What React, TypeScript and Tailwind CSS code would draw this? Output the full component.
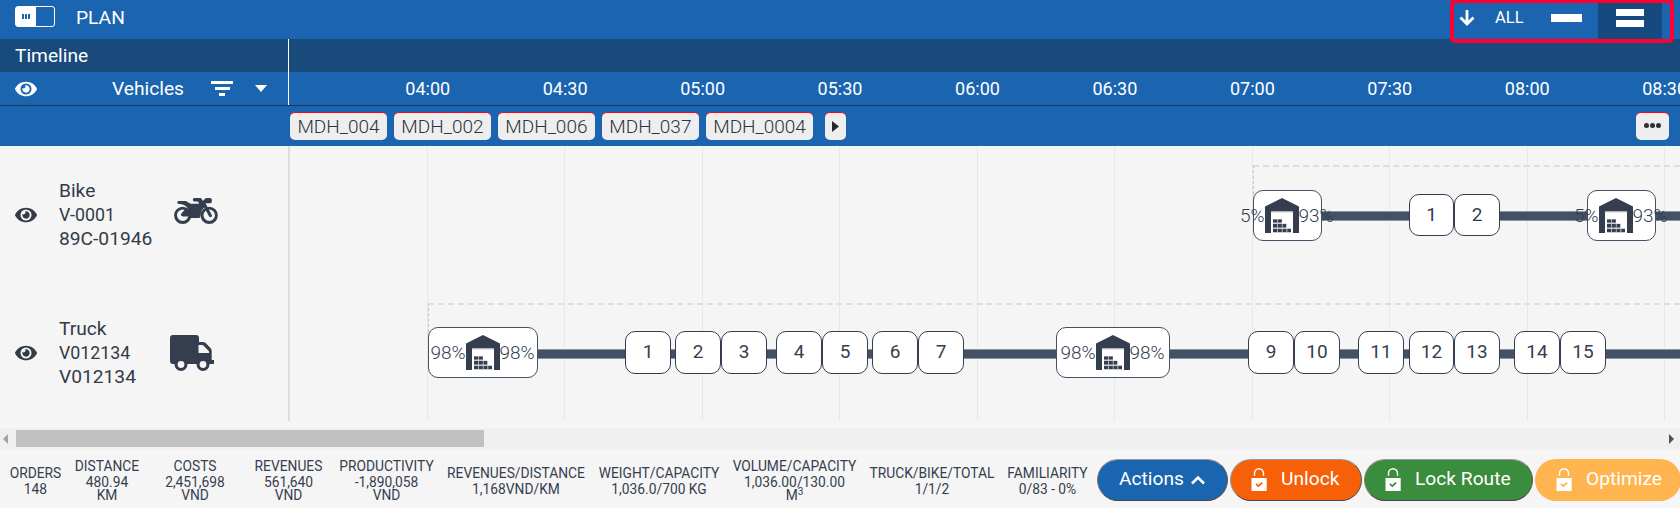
import React from "react";
import { FaEye } from "react-icons/fa";

const times = ["04:00", "04:30", "05:00", "05:30", "06:00", "06:30", "07:00", "07:30", "08:00", "08:30"];
const chips = ["MDH_004", "MDH_002", "MDH_006", "MDH_037", "MDH_0004"];

type Node = { x: number; w: number; label: string };
type Depot = { x: number; w: number; left: string; right: string };
type Route = { start: number; lineTop: string; depotTop: string; nodeTop: string; nodes: Node[]; depots: Depot[] };

// x values are offsets from the left edge of the chart area
const bike: Route = {
  start: 963,
  lineTop: "top-[66px]",
  depotTop: "top-[45px]",
  nodeTop: "top-[49px] h-[42px]",
  nodes: [
    { x: 1119, w: 45, label: "1" },
    { x: 1164, w: 46, label: "2" },
  ],
  depots: [
    { x: 963, w: 69, left: "5%", right: "93%" },
    { x: 1297, w: 69, left: "5%", right: "93%" },
  ],
};

const truck: Route = {
  start: 138,
  lineTop: "top-[66px]",
  depotTop: "top-[44px]",
  nodeTop: "top-[48px] h-[43px]",
  nodes: [
    { x: 335, w: 46, label: "1" },
    { x: 385, w: 46, label: "2" },
    { x: 431, w: 46, label: "3" },
    { x: 486, w: 46, label: "4" },
    { x: 532, w: 46, label: "5" },
    { x: 582, w: 46, label: "6" },
    { x: 628, w: 46, label: "7" },
    { x: 958, w: 46, label: "9" },
    { x: 1004, w: 46, label: "10" },
    { x: 1068, w: 46, label: "11" },
    { x: 1119, w: 45, label: "12" },
    { x: 1164, w: 46, label: "13" },
    { x: 1224, w: 46, label: "14" },
    { x: 1270, w: 46, label: "15" },
  ],
  depots: [
    { x: 138, w: 110, left: "98%", right: "98%" },
    { x: 766, w: 114, left: "98%", right: "98%" },
  ],
};

function Warehouse() {
  return (
    <svg className="block h-[35px] w-[34px] shrink-0" viewBox="0 0 34 35" fill="#353e4f">
      <path d="M0 8.500 17 0l17 8.500V35h-6V13.500H6V35H0z" />
      <path d="M6 13.500h22V14.500H6zM8 21h9v4.500h4.500V30H26v5H8z" fill="#c9ccd0" />
      <path d="M8 21.500h4v3H8zM12.800 21.500h4v3h-4zM8 26h4v3.400H8zM12.800 26h4v3.400h-4zM17.600 26h3.600v3.400h-3.600zM8 31h4v3H8zM12.800 31h4v3h-4zM17.600 31h3.800v3h-3.800zM22.300 31h3.700v3h-3.700z" />
    </svg>
  );
}

function LockIcon({ tick }: { tick: string }) {
  return (
    <svg className="mb-px block h-[23px] w-[16px]" viewBox="0 0 16 23" fill="none">
      <path d="M3.500 7.800V5.300a4.500 4.500 0 0 1 9 0v2.500" stroke="#fff" strokeWidth="1.400" />
      <path d="M0.500 10h15.200v13H0.500z" fill="#fff" />
      <path d="m5 16 2.400 2.200 3.800-3.600" stroke={tick} strokeWidth="1.700" />
    </svg>
  );
}

function Motorcycle() {
  return (
    <svg className="block h-[26px] w-[44px]" viewBox="0 0 44 26" fill="#353e4f">
      <circle cx="8.700" cy="17.300" r="7.200" fill="none" stroke="#353e4f" strokeWidth="2.900" />
      <circle cx="35.200" cy="17.300" r="7.200" fill="none" stroke="#353e4f" strokeWidth="2.900" />
      <path d="M4.500 3h7c2 0 3.500 2.800 5.500 2.800h8L24 3.400h-3.500a1.700 1.700 0 0 1 0-3.400H26c1 0 1.700.6 2 1.500L29 3l1.700-2c.5-.6 1.200-1 2-1H36c1 0 1.800.8 1.800 1.800v1.700c0 1-.8 1.800-1.800 1.800h-4.500l6.300 11.600c.9 1.800-1.600 3.300-2.700 1.500L30.300 9.600c-2.400 2-3.300 4-3.800 8.300-.1 1.300-.8 2.100-2 2.100h-7.700l-1-1.600H9c-2 0-2.600-1.500-1.600-2.800l3.500-4.200h3.400c-1.800-3.200-4.400-5.300-8.300-5.300H4.500a1.600 1.600 0 0 1 0-3.100z" />
    </svg>
  );
}

function Truck() {
  return (
    <svg className="block h-[36px] w-[44px]" viewBox="0 0 44 36" fill="#353e4f">
      <path d="M3 0h23a3 3 0 0 1 3 3v4h4c1 0 2 .4 2.700 1.100l5 5.200c.6.700 1 1.600 1 2.600V25H44v4H3a3 3 0 0 1-3-3V3a3 3 0 0 1 3-3z" />
      <path d="M28.500 10h3.600c.5 0 .9.200 1.200.500l5.200 5.200c.3.300.5.700.5 1.200V18H28.500z" fill="#f5f5f5" />
      <circle cx="11" cy="29.500" r="6.500" />
      <circle cx="33" cy="29.500" r="6.500" />
      <circle cx="11" cy="29.500" r="3.400" fill="#f5f5f5" />
      <circle cx="33" cy="29.500" r="3.400" fill="#f5f5f5" />
    </svg>
  );
}

function RouteRow({ route }: { route: Route }) {
  return (
    <div className="relative h-[138px] text-[#353e4f]">
      <div className="absolute right-0 top-[20px] h-[40px] border-l border-t-2 border-dashed border-l-[#c4c4c4] border-t-[#dedede]" style={{ left: route.start }} />
      <div className={`absolute right-0 h-[10px] border-y border-[#8c96a3] bg-[#435065] ${route.lineTop}`} style={{ left: route.start + 20 }} />
      {route.depots.map((d) => (
        <div key={d.x} className={`absolute flex h-[51px] items-center justify-center rounded-[10px] border border-[#435065] bg-white text-[19px] font-light leading-none ${d.w < 80 ? "pr-[12px]" : "pr-px"} ${route.depotTop}`} style={{ left: d.x, width: d.w }}>
          <span className="flex w-[35px] shrink-0 justify-end">{d.left}</span>
          <Warehouse />
          <span className="w-[35px] shrink-0">{d.right}</span>
        </div>
      ))}
      {route.nodes.map((n) => (
        <div key={n.x} className={`absolute flex items-center justify-center rounded-[10px] border border-[#353e4f] bg-white text-[19px] ${route.nodeTop}`} style={{ left: n.x, width: n.w }}>
          {n.label}
        </div>
      ))}
    </div>
  );
}

function Vehicle({ lines, icon }: { lines: string[]; icon: React.ReactNode }) {
  return (
    <div className="flex h-[138px] items-start pt-[32px] text-[#333b48]">
      <div className="flex h-[73px] w-[59px] items-center pl-[15px]">
        <FaEye className="h-[22px] w-[22px]" />
      </div>
      <div className="w-[111px] pt-px text-[19.200px] leading-[24px]">
        {lines.map((l, i) => (
          <div key={i} className={i === 1 ? "text-[17.800px]" : ""}>{l}</div>
        ))}
      </div>
      {icon}
    </div>
  );
}

function Stat({ width, label, value }: { width: string; label: string; value: React.ReactNode }) {
  return (
    <div className={`${width} shrink-0 text-center text-[13.800px] text-[#353e4f]`}>
      <div className="leading-[19px]">{label}</div>
      <div className="leading-[13px]">{value}</div>
    </div>
  );
}

export default function App() {
  return (
    <div className="flex h-[508px] w-[1680px] flex-col overflow-hidden bg-[#f5f5f5] font-[Roboto,sans-serif] text-[19.200px]">
      <header className="flex h-[39px] shrink-0 items-start bg-[#1b65b0] text-white">
        <div className="ml-[15px] mt-[6px] flex h-[21px] w-[40px] rounded-[3px] border border-white">
          <div className="flex w-[20px] items-center justify-center gap-[1.500px] bg-white">
            <i className="h-[5px] w-[1.500px] bg-[#1b65b0]" />
            <i className="h-[5px] w-[1.500px] bg-[#1b65b0]" />
            <i className="h-[5px] w-[1.500px] bg-[#1b65b0]" />
          </div>
        </div>
        <div className="ml-[21px] mt-[4px] leading-[27px]">PLAN</div>
        <div className="relative z-10 ml-auto mr-[6px] mt-[-1px] flex h-[44px] w-[224px] rounded-[5px] border-4 border-[#ff0033]">
          <svg className="ml-[5px] mt-[7px] h-[16px] w-[16px]" viewBox="0 0 16 16" fill="none" stroke="#fff" strokeWidth="2.800">
            <path d="M8 0v14M1.500 7.500 8 14l6.500-6.500" />
          </svg>
          <span className="ml-[20px] mt-[3px] w-[56px] text-[16.500px] leading-[23px]">ALL</span>
          <i className="mt-[11px] h-[8px] w-[31px] bg-white" />
          <div className="ml-[16px] flex w-[64px] flex-col items-center bg-[#164a7e] pt-[6px]">
            <i className="h-[7px] w-[28px] bg-white" />
            <i className="mt-[4px] h-[7px] w-[28px] bg-white" />
          </div>
        </div>
      </header>

      <div className="flex h-[66px] shrink-0 text-white">
        <div className="w-[289px] shrink-0 border-r border-white">
          <div className="h-[33px] bg-[#184a7c] pl-[15px] leading-[33px]">Timeline</div>
          <div className="flex h-[33px] items-center bg-[#1b65b0] pl-[15px]">
            <FaEye className="h-[22px] w-[22px]" />
            <span className="ml-[75px] w-[99px] pt-px">Vehicles</span>
            <div className="flex w-[22px] flex-col items-center gap-[3.500px]">
              <i className="h-[2.700px] w-[22px] bg-white" />
              <i className="h-[2.700px] w-[15px] bg-white" />
              <i className="h-[2.700px] w-[6px] bg-white" />
            </div>
            <svg className="ml-[22px] h-[7px] w-[12px]" viewBox="0 0 12 7" fill="#fff"><path d="M0 0h12L6 7z" /></svg>
          </div>
        </div>
        <div className="min-w-0 grow overflow-hidden">
          <div className="h-[33px] bg-[#184a7c]" />
          <div className="flex h-[33px] items-center bg-[#1b65b0] pl-[70px] text-[18px]">
            {times.map((t) => (
              <div key={t} className="w-[137.450px] shrink-0 text-center">{t}</div>
            ))}
          </div>
        </div>
      </div>

      <div className="flex h-[41px] shrink-0 items-start border-t border-[#20354f] bg-[#1b65b0] pl-[290px] pt-[6px] font-light text-[#2c3440]">
        {chips.map((c) => (
          <div key={c} className="mr-[7px] h-[28px] rounded-[5px] border-t border-[#ff0014] bg-[#eee] px-[7.400px] text-[19px] leading-[27px]">{c}</div>
        ))}
        <div className="ml-[4.500px] flex h-[28px] w-[21px] items-center justify-center rounded-[5px] border-t border-[#ff0014] bg-[#eee]">
          <svg className="h-[11px] w-[7px]" viewBox="0 0 7 11" fill="#26262e"><path d="M0 0 7 5.500 0 11z" /></svg>
        </div>
        <div className="ml-auto mr-[11px] flex h-[28px] w-[33px] items-center justify-center gap-px rounded-[5px] border-t border-[#ff0014] bg-[#eee] pb-[3px]">
          <i className="size-[5px] rounded-full bg-[#303038]" />
          <i className="size-[5px] rounded-full bg-[#303038]" />
          <i className="size-[5px] rounded-full bg-[#303038]" />
        </div>
      </div>

      <main className="flex h-[275px] shrink-0">
        <div className="w-[290px] shrink-0 border-r-2 border-[#ddd]">
          <Vehicle lines={["Bike", "V-0001", "89C-01946"]} icon={<div className="ml-[4px] mt-[20px]"><Motorcycle /></div>} />
          <Vehicle lines={["Truck", "V012134", "V012134"]} icon={<div className="mt-[19px]"><Truck /></div>} />
        </div>
        <div className="relative min-w-0 grow overflow-hidden">
          {times.map((t, i) => (
            <div key={t} className="absolute inset-y-0 w-px bg-[#e8e8e8]" style={{ left: 137 + Math.round(i * 137.45) }} />
          ))}
          <div className="relative mt-[-1px]">
            <RouteRow route={bike} />
            <RouteRow route={truck} />
          </div>
        </div>
      </main>

      <div className="mt-[7px] flex h-[21px] shrink-0 items-center bg-[#f0f0f0]">
        <svg className="ml-[3px] h-[10px] w-[5px]" viewBox="0 0 5 10" fill="#a3a3a3"><path d="M5 0v10L0 5z" /></svg>
        <div className="ml-[8px] h-[17px] w-[468px] bg-[#c1c1c1]" />
        <svg className="ml-auto mr-[6px] h-[10px] w-[5px]" viewBox="0 0 5 10" fill="#505050"><path d="M0 0v10l5-5z" /></svg>
      </div>

      <footer className="flex h-[59px] shrink-0 items-center pl-[3px] pt-[2px]">
        <div className="flex w-[1094px] shrink-0 items-center">
          <Stat width="w-[65px]" label="ORDERS" value="148" />
          <Stat width="w-[78px]" label="DISTANCE" value={<>480.94<br />KM</>} />
          <Stat width="w-[98px]" label="COSTS" value={<>2,451,698<br />VND</>} />
          <Stat width="w-[89px]" label="REVENUES" value={<>561,640<br />VND</>} />
          <Stat width="w-[107px]" label="PRODUCTIVITY" value={<>-1,890,058<br />VND</>} />
          <Stat width="w-[152px]" label="REVENUES/DISTANCE" value="1,168VND/KM" />
          <Stat width="w-[134px]" label="WEIGHT/CAPACITY" value="1,036.0/700 KG" />
          <Stat width="w-[137px]" label="VOLUME/CAPACITY" value={<>1,036.00/130.00<br />M<sup className="text-[10px] leading-none">3</sup></>} />
          <Stat width="w-[138px]" label="TRUCK/BIKE/TOTAL" value="1/1/2" />
          <Stat width="w-[93px]" label="FAMILIARITY" value="0/83 - 0%" />
        </div>
        <div className="flex shrink-0 gap-[2px] text-[19.200px] text-white">
          <button className="flex h-[42px] w-[131px] items-center rounded-full border border-b-[#454545] border-l-[#777] border-r-[#555] border-t-[#999] bg-[#1b65b0] pl-[21px]">
            Actions
            <svg className="ml-[7px] h-[10px] w-[14px]" viewBox="0 0 14 10" fill="none" stroke="#fff" strokeWidth="2.600"><path d="M1 8.500 7 2.500l6 6" /></svg>
          </button>
          <button className="flex h-[42px] w-[132px] items-center gap-[14px] rounded-full border border-b-[#454545] border-l-[#999] border-r-[#555] border-t-[#999] bg-[#f66009] pl-[20px]">
            <LockIcon tick="#f66009" />Unlock
          </button>
          <button className="flex h-[42px] w-[169px] items-center gap-[14px] rounded-full border border-b-[#454545] border-l-[#888] border-r-[#555] border-t-[#999] bg-[#398d3c] pl-[20px]">
            <LockIcon tick="#398d3c" />Lock Route
          </button>
          <button className="flex h-[42px] w-[146px] items-center gap-[14px] rounded-full bg-[#ffb54f] pl-[21px]">
            <LockIcon tick="#ffb54f" />Optimize
          </button>
        </div>
      </footer>
    </div>
  );
}
